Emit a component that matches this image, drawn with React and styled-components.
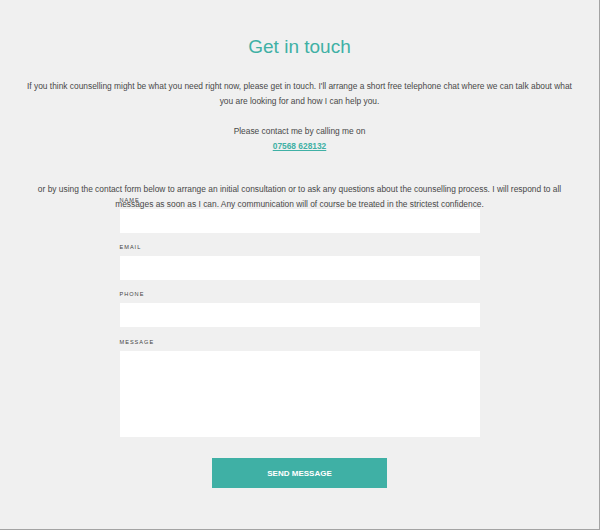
import React from "react";
import styled, { createGlobalStyle } from "styled-components";

const GlobalStyle = createGlobalStyle`
  body {
    margin: 0;
    background: #f0f0f0;
    font-family: "Liberation Sans", Arial, sans-serif;
  }
`;

const teal = "#3fb0a5";

const Page = styled.div`
  width: 600px;
  height: 530px;
  box-sizing: border-box;
  border-right: 1px solid #a3a3a3;
  border-bottom: 1px solid #a3a3a3;
  padding-top: 36px;
  text-align: center;
  overflow: hidden;
`;

const Title = styled.h1`
  margin: 0;
  font-size: 19px;
  line-height: 22px;
  font-weight: normal;
  color: ${teal};
`;

const Text = styled.p`
  margin: ${({ gap }) => gap}px 24px 0;
  font-size: 8.4px;
  line-height: 15px;
  color: #484848;
`;

const Phone = styled.a`
  display: block;
  color: ${teal};
  font-weight: bold;
  text-decoration: underline;
`;

const Form = styled.form`
  position: relative;
  width: 360px;
  margin: -16px auto 0;
  display: flex;
  flex-direction: column;
  gap: 10px;
  text-align: left;
`;

const Field = styled.label`
  display: flex;
  flex-direction: column;
  gap: 5px;
  margin-top: ${({ tall }) => (tall ? "1px" : "0")};
`;

const Label = styled.span`
  font-size: 5.6px;
  line-height: 8px;
  letter-spacing: 1px;
  text-transform: uppercase;
  color: #444;
`;

const Input = styled.input`
  height: 24px;
  border: none;
  background: #fff;
  padding: 0 6px;
  box-sizing: border-box;
`;

const TextArea = styled.textarea`
  height: 86px;
  border: none;
  background: #fff;
  resize: none;
  box-sizing: border-box;
`;

const SendButton = styled.button`
  align-self: center;
  width: 175px;
  height: 30px;
  margin-top: 11px;
  border: none;
  background: ${teal};
  color: #fff;
  font-family: inherit;
  font-size: 8px;
  font-weight: bold;
  text-transform: uppercase;
`;

const fields = ["Name", "Email", "Phone"];

export default function App() {
  return (
    <Page>
      <GlobalStyle />
      <Title>Get in touch</Title>
      <Text gap={21}>
        If you think counselling might be what you need right now, please get
        in touch. I'll arrange a short free telephone chat where we can talk
        about what you are looking for and how I can help you.
      </Text>
      <Text gap={15}>
        Please contact me by calling me on
        <Phone href="#">07568 628132</Phone>
      </Text>
      <Text gap={28}>
        or by using the contact form below to arrange an initial consultation
        or to ask any questions about the counselling process. I will respond
        to all messages as soon as I can. Any communication will of course be
        treated in the strictest confidence.
      </Text>
      <Form onSubmit={e => e.preventDefault()}>
        {fields.map(name => (
          <Field key={name}>
            <Label>{name}</Label>
            <Input type="text" />
          </Field>
        ))}
        <Field tall>
          <Label>Message</Label>
          <TextArea />
        </Field>
        <SendButton type="submit">Send message</SendButton>
      </Form>
    </Page>
  );
}
